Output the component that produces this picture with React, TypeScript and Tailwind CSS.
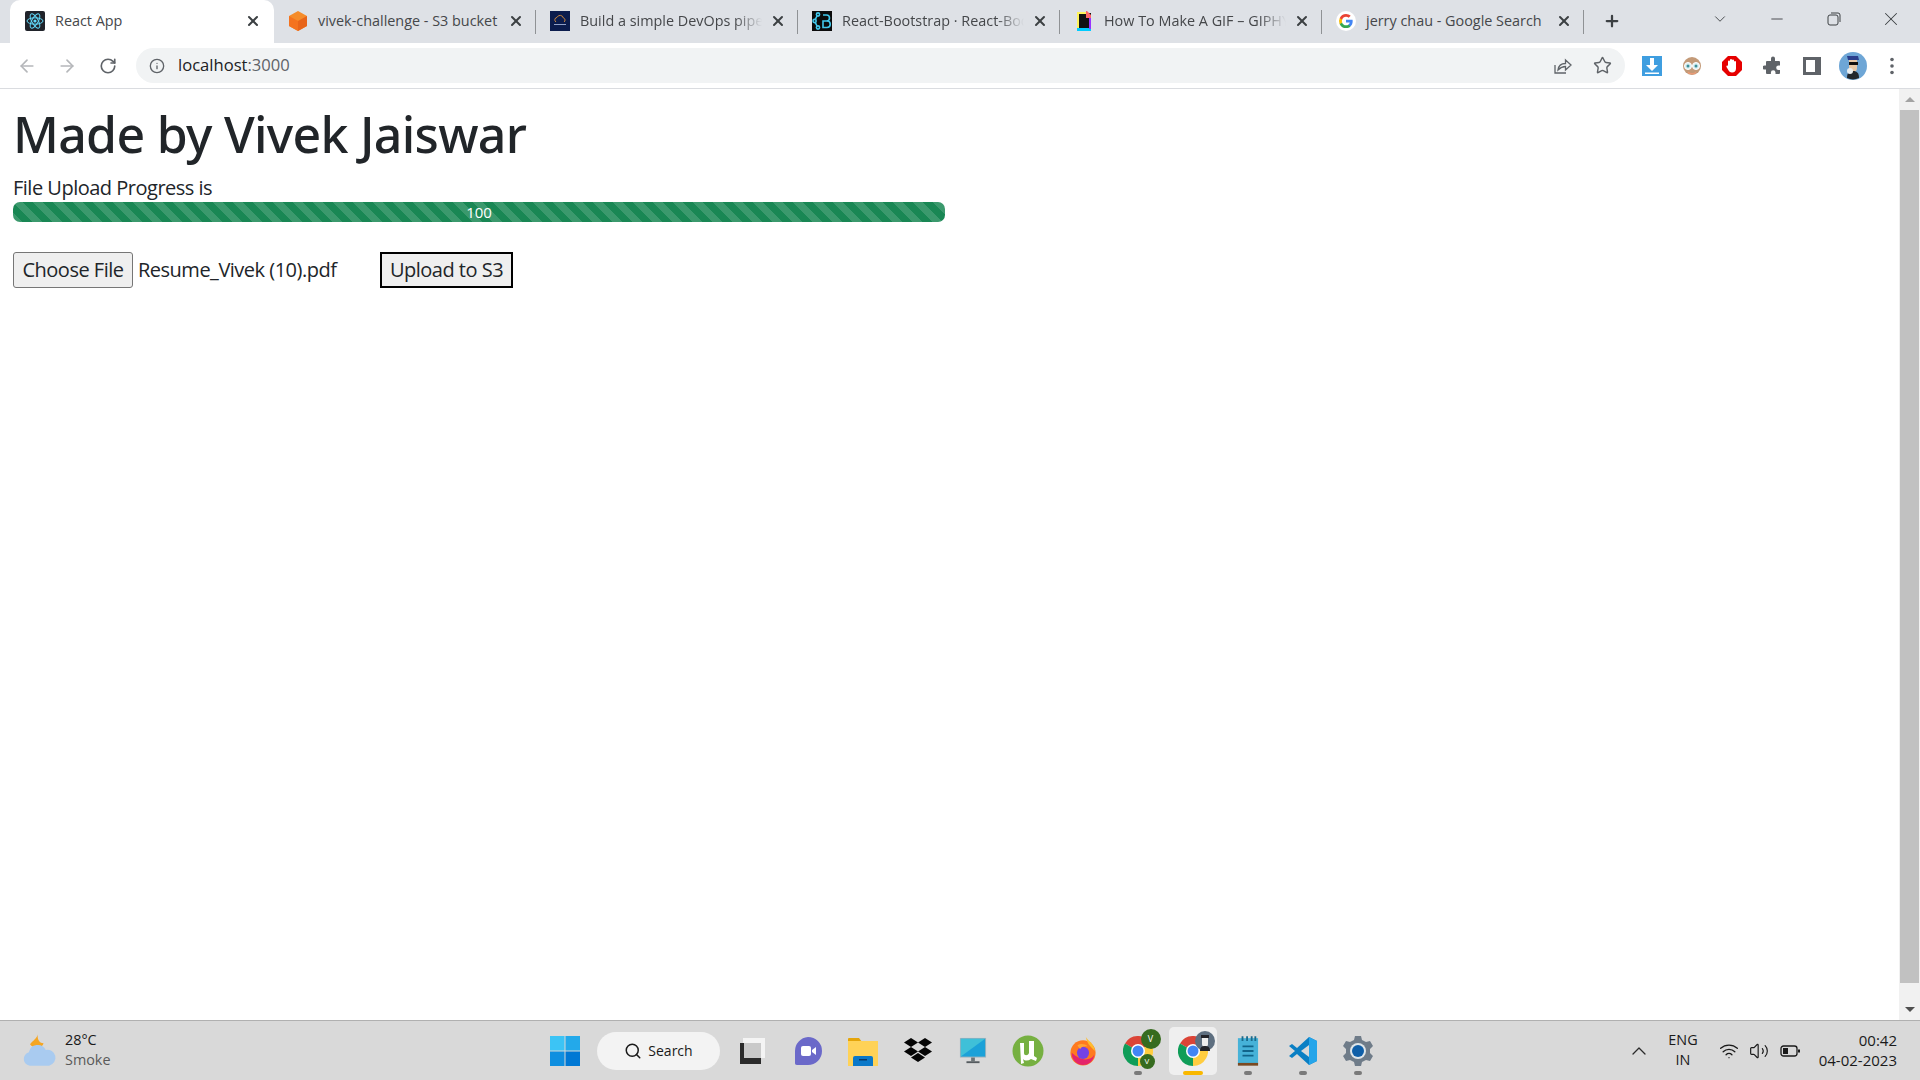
import { ArrowLeft, ArrowRight, ChevronDown, ChevronUp, Info, Minus, Plus, RotateCw, Search, Star, Volume2, Wifi, X } from 'lucide-react'
import type { ReactNode } from 'react'

const sans = 'font-["Open_Sans","Liberation_Sans",sans-serif]'

function ReactIcon() {
    return (
        <svg viewBox="0 0 20 20" className="w-5 h-5">
            <rect width="20" height="20" rx="2" fill="#20232a" />
            <g fill="none" stroke="#61dafb" strokeWidth="1">
                <ellipse cx="10" cy="10" rx="8" ry="3.2" />
                <ellipse cx="10" cy="10" rx="8" ry="3.2" transform="rotate(60 10 10)" />
                <ellipse cx="10" cy="10" rx="8" ry="3.2" transform="rotate(120 10 10)" />
            </g>
            <circle cx="10" cy="10" r="1.6" fill="#61dafb" />
        </svg>
    )
}

function CubeIcon() {
    return (
        <svg viewBox="0 0 20 20" className="w-5 h-5">
            <path d="M10 0 19 5 19 15 10 20 1 15 1 5Z" fill="#f58c2a" />
            <path d="M10 10 19 5 19 15 10 20Z" fill="#e8651a" />
            <path d="M10 10 1 5 1 15 10 20Z" fill="#f4731f" />
        </svg>
    )
}

function DevOpsIcon() {
    return (
        <svg viewBox="0 0 20 20" className="w-5 h-5">
            <rect width="20" height="20" fill="#0b1c4d" />
            <path d="M6 11a2.5 2.5 0 0 1 1-4.6 3.4 3.4 0 0 1 6.4.6A2.2 2.2 0 0 1 14 11" fill="none" stroke="#c9853c" strokeWidth="1" />
            <rect x="4" y="13" width="12" height="1" fill="#8fa0c8" />
        </svg>
    )
}

function BootstrapIcon() {
    return (
        <svg viewBox="0 0 20 20" className="w-5 h-5">
            <rect width="20" height="20" fill="#0b0b0b" />
            <g fill="none" stroke="#41c8ec" strokeWidth="1.6">
                <path d="M11 4h3.5a2.7 2.7 0 0 1 0 6H11m0 0h4a3 3 0 0 1 0 6.5h-4Z" />
                <circle cx="6" cy="3.5" r="1.6" />
                <circle cx="2.6" cy="10" r="1.6" />
                <circle cx="6" cy="16.5" r="1.6" />
                <path d="M5 5 3.2 8.6M3.2 11.4 5 15" />
            </g>
        </svg>
    )
}

function GiphyIcon() {
    return (
        <svg viewBox="0 0 20 20" className="w-5 h-5">
            <rect x="3" y="2" width="14" height="16" fill="#111" />
            <path d="M3 1h9v2H5v14H3Z" fill="#fff35c" />
            <path d="M3 17h14v3H3Z" fill="#00ccff" />
            <path d="M15 7h2v11h-2Z" fill="#9933ff" />
            <path d="M12 0h1l4 4v3h-5Z" fill="#ff6666" />
        </svg>
    )
}

function GoogleIcon() {
    return (
        <svg viewBox="0 0 48 48" className="w-5 h-5">
            <circle cx="24" cy="24" r="24" fill="#fff" />
            <path d="M40 24.5c0-1.2-.1-2.300-.3-3.300H24v6.300h9a7.700 7.700 0 0 1-3.300 5v4.200h5.400c3.100-2.900 4.900-7.100 4.900-12.200Z" fill="#4285f4" />
            <path d="M24 41c4.500 0 8.300-1.500 11.100-4.100l-5.400-4.200c-1.500 1-3.400 1.600-5.700 1.600-4.400 0-8.100-3-9.400-6.900H9v4.300A16.800 16.800 0 0 0 24 41Z" fill="#34a853" />
            <path d="M14.600 27.400a10 10 0 0 1 0-6.500v-4.400H9a17 17 0 0 0 0 15.200Z" fill="#fbbc05" />
            <path d="M24 13.700c2.500 0 4.700.9 6.400 2.500l4.800-4.800C32.300 8.700 28.500 7 24 7A16.800 16.800 0 0 0 9 16.500l5.600 4.400c1.300-4 5-7.200 9.400-7.200Z" fill="#ea4335" />
        </svg>
    )
}

function Tab({ icon, title, active, fade }: { icon: ReactNode; title: string; active?: boolean; fade?: boolean }) {
    return (
        <div className={active ? 'w-[264px] h-[43px] bg-white rounded-t-[10px] flex items-center pl-[15px] pr-[13px] pb-[2px]' : 'w-[262px] h-[43px] flex items-center pl-[14px] pr-[12px] pb-[2px] relative'}>
            <div className="w-5 h-5 shrink-0">{icon}</div>
            <div className={fade ? 'ml-[10px] flex-1 min-w-0 whitespace-nowrap text-[14.4px] text-[#45474a] [mask-image:linear-gradient(to_right,black_85%,transparent)]' : 'ml-[10px] flex-1 min-w-0 whitespace-nowrap text-[14.4px] text-[#45474a]'}>
                {title}
            </div>
            <X className="w-4 h-4 ml-2 shrink-0 text-[#3c4043]" strokeWidth={3} />
            {!active && <div className="absolute right-0 top-[10px] h-[24px] w-px bg-[#8f9295]" />}
        </div>
    )
}

function TabStrip() {
    return (
        <div className="h-[43px] bg-[#dee1e6] flex items-start pl-[10px]">
            <Tab active icon={<ReactIcon />} title="React App" />
            <Tab icon={<CubeIcon />} title="vivek-challenge - S3 bucket" />
            <Tab fade icon={<DevOpsIcon />} title="Build a simple DevOps pipe" />
            <Tab fade icon={<BootstrapIcon />} title="React-Bootstrap · React-Boo" />
            <Tab fade icon={<GiphyIcon />} title="How To Make A GIF – GIPHY" />
            <Tab icon={<GoogleIcon />} title="jerry chau - Google Search" />
            <Plus className="w-[18px] h-[18px] ml-[19px] mt-[12px] text-[#3c4043]" strokeWidth={3} />
            <ChevronDown className="w-[18px] h-[18px] ml-[90px] mt-[10px] text-[#3c4043]" strokeWidth={1.2} />
            <Minus className="w-[18px] h-[18px] ml-[39px] mt-[10px] text-[#3c4043]" strokeWidth={1.2} />
            <svg viewBox="0 0 14 14" className="w-[14px] h-[14px] ml-[41px] mt-[12px]" fill="none" stroke="#3c4043" strokeWidth="1">
                <rect x="1" y="3" width="10" height="10" rx="2" />
                <path d="M4 1h7a2 2 0 0 1 2 2v7" />
            </svg>
            <X className="w-[22px] h-[22px] ml-[39px] mt-[8px] text-[#3c4043]" strokeWidth={1.1} />
        </div>
    )
}

function Toolbar() {
    return (
        <div className="h-[46px] bg-white border-b border-[#dadce0] flex items-center">
            <ArrowLeft className="w-5 h-5 ml-[17px] text-[#b5b7ba]" />
            <ArrowRight className="w-5 h-5 ml-[20px] text-[#b5b7ba]" />
            <RotateCw className="w-[18px] h-[18px] ml-[22px] text-[#5f6368]" strokeWidth={2.2} />
            <div className="w-[1489px] h-[35px] ml-[19px] rounded-full bg-[#f1f3f4] flex items-center pl-[13px] pr-[13px]">
                <Info className="w-4 h-4 text-[#5f6368]" />
                <div className="ml-[13px] text-[16.6px] text-[#202124]">
                    localhost<span className="text-[#5f6368]">:3000</span>
                </div>
                <svg viewBox="0 0 20 20" className="w-5 h-5 ml-auto" fill="none" stroke="#5f6368" strokeWidth="1.3">
                    <path d="M3 9v8h11" />
                    <path d="M6 14c.5-4 3.500-6.500 7.500-6.500V4L19 9l-5.500 5v-3.500C10 10.500 8 12 6 14Z" />
                </svg>
                <Star className="w-[19px] h-[19px] ml-[21px] text-[#5f6368]" strokeWidth={1.8} />
            </div>
            <div className="flex items-center ml-[17px]">
                <svg viewBox="0 0 20 20" className="w-5 h-5">
                    <rect width="20" height="20" fill="#3f9ee0" />
                    <path d="M8 2h4v7h4l-6 6-6-6h4Z" fill="#fff" />
                    <rect x="3" y="16.500" width="14" height="1.500" fill="#fff" />
                </svg>
                <svg viewBox="0 0 20 20" className="w-5 h-5 ml-[20px]">
                    <circle cx="10" cy="10" r="9" fill="#c39a78" />
                    <circle cx="6" cy="10" r="3.500" fill="#d8eef0" stroke="#fff" />
                    <circle cx="14" cy="10" r="3.500" fill="#d8eef0" stroke="#fff" />
                    <circle cx="6" cy="10" r="1.500" fill="#3d8f98" />
                    <circle cx="14" cy="10" r="1.500" fill="#3d8f98" />
                    <path d="M6 15.500c2.500 2 5.500 2 8 0v2a9 9 0 0 1-8 0Z" fill="#e99a76" />
                </svg>
                <svg viewBox="0 0 20 20" className="w-5 h-5 ml-[20px]">
                    <path d="M6 0h8l6 6v8l-6 6H6l-6-6V6Z" fill="#e60000" />
                    <path d="M6 9V5.500a1 1 0 0 1 2 0V4a1 1 0 0 1 2 0v.500a1 1 0 0 1 2 0V6a1 1 0 0 1 2 0v6.500c0 2.500-1.500 4-4 4-2 0-3-1-4-3L4.500 11c-.5-1 .8-2 1.500-1Z" fill="#fff" />
                </svg>
                <svg viewBox="0 0 20 20" className="w-5 h-5 ml-[21px]">
                    <path d="M8 2.500a2 2 0 0 1 4 0V5h4a1 1 0 0 1 1 1v3.500h-1.500a2.300 2.300 0 0 0 0 4.600H17V17a1 1 0 0 1-1 1h-3.500v-1.500a2.300 2.300 0 0 0-4.600 0V18H4a1 1 0 0 1-1-1v-3.500H1.500a2 2 0 0 1 0-4H3V6a1 1 0 0 1 1-1h4Z" fill="#5f6368" />
                </svg>
                <svg viewBox="0 0 20 20" className="w-5 h-5 ml-[19px]">
                    <path fillRule="evenodd" d="M1 1h18v18H1ZM4 4v12h9V4Z" fill="#5f6368" />
                </svg>
                <svg viewBox="0 0 28 28" className="w-7 h-7 ml-[17px]">
                    <circle cx="14" cy="14" r="14" fill="#6ea6d6" />
                    <path d="M8 4h11l1 4H9Z" fill="#2b3f8c" />
                    <path d="M10 8h8v8a4 4 0 0 1-8 0Z" fill="#e8c9a8" />
                    <rect x="10" y="10" width="9" height="3" fill="#111" />
                    <path d="M8 26c0-5 2-7 6-7s6 2 6 7a14 14 0 0 1-12 0Z" fill="#20262c" />
                    <circle cx="11" cy="19" r="3" fill="#e8eef2" />
                </svg>
                <svg viewBox="0 0 4 18" className="w-1 h-[18px] ml-[23px]" fill="#5f6368">
                    <circle cx="2" cy="2.500" r="1.800" />
                    <circle cx="2" cy="9" r="1.800" />
                    <circle cx="2" cy="15.500" r="1.800" />
                </svg>
            </div>
        </div>
    )
}

function Scrollbar() {
    return (
        <div className="w-[21px] shrink-0 bg-[#f1f1f1] flex flex-col items-center">
            <div className="h-[21px] flex items-center justify-center">
                <div className="w-0 h-0 border-x-[5px] border-x-transparent border-b-[5px] border-b-[#a3a3a3]" />
            </div>
            <div className="w-[19px] flex-1 bg-[#c1c1c1]" />
            <div className="h-[21px] mt-[16px] flex items-center justify-center">
                <div className="w-0 h-0 border-x-[5px] border-x-transparent border-t-[5px] border-t-[#505050]" />
            </div>
        </div>
    )
}

function Page() {
    return (
        <div className="flex-1 flex min-h-0">
            <main className="flex-1 bg-white px-[13px] pt-[15px]">
                <h1 className='text-[50px] leading-[60px] font-medium text-[#212529] tracking-[-0.7px] font-["Noto_Sans",sans-serif]'>Made by Vivek Jaiswar</h1>
                <div className="mt-[10px] text-[20px] leading-[28px] text-[#212529] tracking-[-0.5px]">File Upload Progress is</div>
                <div className="w-[932px] h-[20px] rounded-[7px] overflow-hidden bg-[#198754] bg-[linear-gradient(45deg,rgba(255,255,255,0.15)_25%,transparent_25%,transparent_50%,rgba(255,255,255,0.15)_50%,rgba(255,255,255,0.15)_75%,transparent_75%,transparent)] bg-[length:20px_20px] flex items-center justify-center text-[15px] text-white">
                    100
                </div>
                <div className="mt-[30px] flex items-center text-[20px] text-[#212529] tracking-[-0.5px]">
                    <div className="w-[120px] h-[36px] border border-[#767676] rounded-[3px] bg-[#efefef] flex items-center justify-center">Choose File</div>
                    <div className="w-[247px] pl-[5px] whitespace-nowrap">Resume_Vivek (10).pdf</div>
                    <div className="w-[133px] h-[36px] border-2 border-black bg-[#efefef] flex items-center justify-center">Upload to S3</div>
                </div>
            </main>
            <Scrollbar />
        </div>
    )
}

function ChromeIcon({ children }: { children?: ReactNode }) {
    return (
        <div className="relative w-[30px] h-[30px]">
            <svg viewBox="0 0 30 30" className="w-[30px] h-[30px]">
                <path d="M15 15 2 7.500A15 15 0 0 1 28 7.500Z" fill="#db4437" />
                <path d="M15 15V30A15 15 0 0 1 2 7.500Z" fill="#0f9d58" />
                <path d="M15 15 28 7.500A15 15 0 0 1 15 30Z" fill="#ffcd40" />
                <circle cx="15" cy="15" r="7" fill="#fff" />
                <circle cx="15" cy="15" r="5.500" fill="#4285f4" />
            </svg>
            {children}
        </div>
    )
}

function Dock({ dot, active, children }: { dot?: boolean; active?: boolean; children: ReactNode }) {
    return (
        <div className={active ? 'relative w-[48px] h-[48px] mx-[3.500px] rounded-[5px] bg-[#efefef] flex items-center justify-center' : 'relative w-[55px] h-[48px] flex items-center justify-center'}>
            {children}
            {dot && <div className="absolute bottom-0 left-1/2 -translate-x-1/2 w-[8px] h-[4px] rounded-full bg-[#7a7a7a]" />}
            {active && <div className="absolute bottom-0 left-1/2 -translate-x-1/2 w-[20px] h-[4px] rounded-full bg-[#f9b800]" />}
        </div>
    )
}

function Taskbar() {
    return (
        <div className="h-[60px] bg-[#d9d9d9] border-t border-[#b0b0b0] flex items-center">
            <svg viewBox="0 0 32 32" className="w-[36px] h-[36px] ml-[21px]">
                <path d="M15 1c-1 4-4 5-7 9 2 3 7 4 10 2 1-1 2-2 2-3-3 0-6-3-5-8Z" fill="#f5a623" />
                <path d="M8 29a6 6 0 0 1-1-11.800A8 8 0 0 1 22 15a5.500 5.500 0 0 1 3 14Z" fill="#a9cbf0" />
            </svg>
            <div className="ml-[8px] -mt-[2px] w-[486px] flex flex-col text-[14.4px] leading-[20px]">
                <span className="text-[#1a1a1a]">28°C</span>
                <span className="text-[#5a5a5a]">Smoke</span>
            </div>
            <svg viewBox="0 0 30 30" className="w-[30px] h-[30px] -translate-x-px">
                <rect width="14.500" height="14.500" fill="#3cc4f5" />
                <rect x="15.500" width="14.500" height="14.500" fill="#23a9ea" />
                <rect y="15.500" width="14.500" height="14.500" fill="#0f8fe0" />
                <rect x="15.500" y="15.500" width="14.500" height="14.500" fill="#0078d4" />
            </svg>
            <div className="ml-[16px] w-[123px] h-[38px] rounded-full bg-[#f3f3f3] flex items-center justify-center gap-[6px] text-[14px] text-[#1a1a1a]">
                <Search className="w-[18px] h-[18px]" strokeWidth={2} />
                Search
            </div>
            <div className="ml-[5px] flex items-center">
                <Dock>
                    <svg viewBox="0 0 28 28" className="w-[28px] h-[28px]">
                        <rect x="4" y="1" width="22" height="20" fill="#f4f4f4" />
                        <rect x="1" y="6" width="21" height="21" fill="#2b2b2b" />
                        <rect x="5" y="6" width="17" height="15" fill="#c9c9c9" />
                    </svg>
                </Dock>
                <Dock>
                    <svg viewBox="0 0 30 30" className="w-[30px] h-[30px]">
                        <path d="M15 1a14 14 0 0 1 0 28H4c-1.500 0-2-1-2-2v-12A14 14 0 0 1 15 1Z" fill="#6b69c9" />
                        <rect x="8" y="10" width="10" height="10" rx="2" fill="#fff" />
                        <path d="M19 14 23 11v8l-4-3Z" fill="#fff" />
                    </svg>
                </Dock>
                <Dock>
                    <svg viewBox="0 0 30 30" className="w-[30px] h-[30px]">
                        <path d="M0 3a1 1 0 0 1 1-1h10l3 4H0Z" fill="#e5a50a" />
                        <rect y="5" width="30" height="25" fill="#ffd257" />
                        <path d="M5 22a2 2 0 0 1 2-2h16a2 2 0 0 1 2 2v8H5Z" fill="#0a78c9" />
                        <rect x="11" y="23" width="8" height="1.500" fill="#07396a" />
                    </svg>
                </Dock>
                <Dock>
                    <svg viewBox="0 0 30 28" className="w-[30px] h-[28px]" fill="#050505">
                        <path d="M8 1 15 5.500 8 10 1 5.500Z" />
                        <path d="M22 1 29 5.500 22 10 15 5.500Z" />
                        <path d="M8 10 15 14.500 8 19 1 14.500Z" />
                        <path d="M22 10 29 14.500 22 19 15 14.500Z" />
                        <path d="M15 16 22 20.500 15 25 8 20.500Z" />
                    </svg>
                </Dock>
                <Dock>
                    <svg viewBox="0 0 30 30" className="w-[28px] h-[30px]">
                        <rect x="1" y="1" width="28" height="21" fill="#9fb3bd" />
                        <rect x="2" y="2" width="26" height="19" fill="#1ba1d8" />
                        <path d="M2 2h26L2 21Z" fill="#3fc0d8" />
                        <rect x="13" y="22" width="4" height="4" fill="#6c7478" />
                        <rect x="8" y="26" width="14" height="2" fill="#555b5f" />
                    </svg>
                </Dock>
                <Dock>
                    <svg viewBox="0 0 32 32" className="w-[32px] h-[32px]">
                        <circle cx="16" cy="16" r="15.500" fill="#76b041" />
                        <path d="M8 8h4v10c0 3 4 3 5 0V6h5v15l3 2-1 3-5-2c-3 2-6 2-8 0l1 4-3 1Z" fill="#fff" />
                    </svg>
                </Dock>
                <Dock>
                    <svg viewBox="0 0 30 32" className="w-[28px] h-[32px]">
                        <circle cx="15" cy="18" r="13.500" fill="#ff7a1f" />
                        <path d="M18 1c2 4 9 7 10 15-3-3-8-6-10-15Z" fill="#ffbd2e" />
                        <path d="M3 18a12 12 0 0 0 24 2c-3 6-14 8-24-2Z" fill="#e4256b" />
                        <circle cx="15" cy="18" r="6.500" fill="#7542e5" />
                        <path d="M9 10c3-2 8-2 11 1-3 0-7 0-8 3Z" fill="#ffa436" />
                    </svg>
                </Dock>
                <Dock dot>
                    <ChromeIcon>
                        <div className="absolute -top-[7px] -right-[8px] w-[20px] h-[20px] rounded-full bg-[#366b1f] flex items-center justify-center text-[9px] text-white">V</div>
                        <div className="absolute -bottom-[3px] right-[-2px] w-[15px] h-[15px] rounded-full bg-[#366b1f] flex items-center justify-center text-[8px] text-white">V</div>
                    </ChromeIcon>
                </Dock>
                <Dock active>
                    <ChromeIcon>
                        <svg viewBox="0 0 20 20" className="absolute -top-[5px] -right-[7px] w-[20px] h-[20px]">
                            <circle cx="10" cy="10" r="10" fill="#5e6f80" />
                            <path d="M6 4h8v3H6Z" fill="#23242a" />
                            <path d="M7 7h6v6a3 3 0 0 1-6 0Z" fill="#eee" />
                            <path d="M5 20c0-4 2-5 5-5s5 1 5 5Z" fill="#23242a" />
                        </svg>
                    </ChromeIcon>
                </Dock>
                <Dock dot>
                    <svg viewBox="0 0 24 34" className="w-[22px] h-[32px]">
                        <rect x="1" y="3" width="22" height="28" fill="#46b2d8" />
                        <rect x="1" y="30" width="22" height="3" fill="#7a4a22" />
                        <path d="M5 1h2v5H5ZM10 1h2v5h-2ZM15 1h2v5h-2ZM19 1h2v5h-2Z" fill="#1a6b8c" />
                        <path d="M6 11h12v2H6ZM6 16h12v2H6ZM6 21h12v2H6Z" fill="#11658a" />
                    </svg>
                </Dock>
                <Dock dot>
                    <svg viewBox="0 0 30 30" className="w-[30px] h-[30px]">
                        <path d="M21 1 29 5v20l-8 4L9 18l-5 4-3-2 6-5-6-5 3-2 5 4Z" fill="#0a7fc4" />
                        <path d="M21 1 29 5v20l-8 4Z" fill="#25a5ea" />
                        <path d="M21 9v12l-8-6Z" fill="#d9d9d9" />
                    </svg>
                </Dock>
                <Dock dot>
                    <svg viewBox="0 0 30 30" className="w-[30px] h-[30px]">
                        <path d="M12 0h6l1 4 4 2 4-1 3 5-3 3v4l3 3-3 5-4-1-4 2-1 4h-6l-1-4-4-2-4 1-3-5 3-3v-4l-3-3 3-5 4 1 4-2Z" fill="#6f7c89" />
                        <circle cx="15" cy="15" r="8" fill="#dfe6ea" />
                        <circle cx="15" cy="15" r="6" fill="#0f5fa8" />
                    </svg>
                </Dock>
            </div>
            <ChevronUp className="w-6 h-6 ml-[242px] text-[#2b2b2b]" strokeWidth={1.3} />
            <div className="ml-[15px] -mt-[2px] w-[34px] flex flex-col items-center text-[14.4px] leading-[20px] text-[#1a1a1a]">
                <span>ENG</span>
                <span>IN</span>
            </div>
            <Wifi className="w-[20px] h-[20px] ml-[19px] text-[#1a1a1a]" strokeWidth={1.6} />
            <Volume2 className="w-[20px] h-[20px] ml-[10px] text-[#1a1a1a]" strokeWidth={1.4} />
            <svg viewBox="0 0 20 12" className="w-[20px] h-[12px] ml-[11px]" fill="none" stroke="#1a1a1a" strokeWidth="1.300">
                <rect x="1" y="1" width="16" height="10" rx="2.500" />
                <rect x="3" y="3" width="5" height="6" fill="#1a1a1a" stroke="none" />
                <path d="M19 4.500v3" strokeWidth="2" />
            </svg>
            <div className="flex-1 pr-[23px] -mt-[2px] flex flex-col items-end text-[15px] leading-[20px] text-[#1a1a1a] whitespace-nowrap">
                <span>00:42</span>
                <span>04-02-2023</span>
            </div>
        </div>
    )
}

export default function App() {
    return (
        <div className={`h-[1080px] w-[1920px] overflow-hidden flex flex-col ${sans}`}>
            <TabStrip />
            <Toolbar />
            <Page />
            <Taskbar />
        </div>
    )
}
